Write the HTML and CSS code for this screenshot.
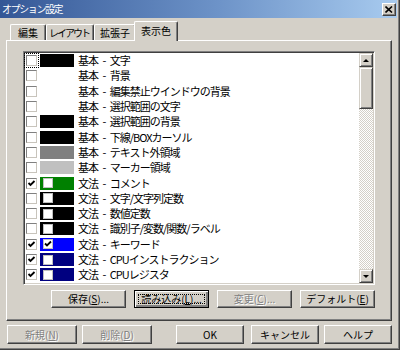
FILE: index.html
```html
<!DOCTYPE html>
<html>
  <head>
    <meta charset="utf-8">
    <link rel="stylesheet" href="styles.css">
  </head>
  <body>
    <div class="window">

      <div class="titlebar">
        <span class="title">オプション設定</span>
        <span class="closebtn">
          <svg width="8" height="7" viewBox="0 0 8 7"><path d="M0.5 0.5 L7 6.5 M7 0.5 L0.5 6.5" stroke="#000" stroke-width="1.6"/></svg>
        </span>
      </div>

      <div class="tabs">
        <div class="tab t1">編集</div>
        <div class="tab t2">レイアウト</div>
        <div class="tab t3">拡張子</div>
        <div class="tab active">表示色</div>
      </div>

      <div class="panel">
        <div class="list">
          <div class="rows">
            <div class="row"><span class="chk focus"></span><span class="swatch black"></span><span class="label">基本 - 文字</span></div>
            <div class="row"><span class="chk"></span><span class="swatch white"></span><span class="label">基本 - 背景</span></div>
            <div class="row"><span class="chk"></span><span class="swatch white"></span><span class="label">基本 - 編集禁止ウインドウの背景</span></div>
            <div class="row"><span class="chk"></span><span class="swatch white"></span><span class="label">基本 - 選択範囲の文字</span></div>
            <div class="row"><span class="chk"></span><span class="swatch black"></span><span class="label">基本 - 選択範囲の背景</span></div>
            <div class="row"><span class="chk"></span><span class="swatch black"></span><span class="label">基本 - 下線/BOXカーソル</span></div>
            <div class="row"><span class="chk"></span><span class="swatch gray"></span><span class="label">基本 - テキスト外領域</span></div>
            <div class="row"><span class="chk"></span><span class="swatch silver"></span><span class="label">基本 - マーカー領域</span></div>
            <div class="row">
              <span class="chk on"><svg width="9" height="9" viewBox="0 0 9 9"><path d="M1.5 4 L3.5 6 L7.5 2" stroke="#000" stroke-width="1.8" fill="none"/></svg></span>
              <span class="swatch green"><span class="inbox"></span></span>
              <span class="label">文法 - コメント</span>
            </div>
            <div class="row"><span class="chk"></span><span class="swatch black"><span class="inbox"></span></span><span class="label">文法 - 文字/文字列定数</span></div>
            <div class="row"><span class="chk"></span><span class="swatch black"><span class="inbox"></span></span><span class="label">文法 - 数値定数</span></div>
            <div class="row"><span class="chk"></span><span class="swatch black"><span class="inbox"></span></span><span class="label">文法 - 識別子/変数/関数/ラベル</span></div>
            <div class="row">
              <span class="chk on"><svg width="9" height="9" viewBox="0 0 9 9"><path d="M1.5 4 L3.5 6 L7.5 2" stroke="#000" stroke-width="1.8" fill="none"/></svg></span>
              <span class="swatch blue"><span class="inbox"><svg width="8" height="8" viewBox="0 0 8 8"><path d="M1 3.5 L3 5.5 L7 1.5" stroke="#000" stroke-width="1.8" fill="none"/></svg></span></span>
              <span class="label">文法 - キーワード</span>
            </div>
            <div class="row">
              <span class="chk on"><svg width="9" height="9" viewBox="0 0 9 9"><path d="M1.5 4 L3.5 6 L7.5 2" stroke="#000" stroke-width="1.8" fill="none"/></svg></span>
              <span class="swatch navy"><span class="inbox"></span></span>
              <span class="label">文法 - CPUインストラクション</span>
            </div>
            <div class="row">
              <span class="chk on"><svg width="9" height="9" viewBox="0 0 9 9"><path d="M1.5 4 L3.5 6 L7.5 2" stroke="#000" stroke-width="1.8" fill="none"/></svg></span>
              <span class="swatch navy"><span class="inbox"></span></span>
              <span class="label">文法 - CPUレジスタ</span>
            </div>
          </div>
          <div class="scrollbar">
            <div class="sbtn"><span class="arrow-up"></span></div>
            <div class="thumb"></div>
            <div class="track"></div>
            <div class="sbtn"><span class="arrow-down"></span></div>
          </div>
        </div>

        <div class="btnrow">
          <div class="btn wide">保存(<u>S</u>)...</div>
          <div class="btn wide focused">読み込み(<u>L</u>)...</div>
          <div class="btn wide disabled">変更(<u>C</u>)...</div>
          <div class="btn wide">デフォルト(<u>E</u>)</div>
        </div>
      </div>

      <div class="footer">
        <div class="btn small disabled">新規(<u>N</u>)</div>
        <div class="btn small disabled">削除(<u>D</u>)</div>
        <div class="btn mid ok">OK</div>
        <div class="btn mid">キャンセル</div>
        <div class="btn mid">ヘルプ</div>
      </div>

    </div>
  </body>
</html>
```

FILE: styles.css
```css
* {box-sizing: border-box;}

body {
  margin: 0;
  font-family: "Noto Sans CJK JP", sans-serif;
  font-size: 10px;
  color: #000;
  background-color: #d4d0c8;
}

.window {
  width: 400px;
  height: 350px;
  background-color: #d4d0c8;
  border-right: 1px solid #404040;
  border-bottom: 1px solid #404040;
  box-shadow: inset -1px -1px #808080;
  display: flex;
  flex-direction: column;
}

/* title bar */
.titlebar {
  height: 18px;
  margin-right: 2px;
  padding: 0 1px 0 2px;
  background: linear-gradient(to right, #345796, #6d93c8 55%, #a8cbef);
  display: flex;
  align-items: center;
  justify-content: space-between;
}

.title {
  color: #fff;
  font-size: 10px;
  letter-spacing: -1.4px;
  line-height: 1;
}

.closebtn {
  width: 14px;
  height: 13px;
  background-color: #d4d0c8;
  border-top: 1px solid #fff;
  border-left: 1px solid #fff;
  border-right: 1px solid #404040;
  border-bottom: 1px solid #404040;
  box-shadow: inset -1px -1px #808080;
  display: flex;
  align-items: center;
  justify-content: center;
}

/* tabs */
.tabs {
  height: 22px;
  padding-left: 10px;
  display: flex;
  align-items: flex-end;
}

.tab {
  height: 16px;
  border-top: 1px solid #fff;
  border-left: 1px solid #fff;
  border-right: 1px solid #404040;
  box-shadow: inset -1px 0 #808080;
  border-radius: 2px 2px 0 0;
  display: flex;
  align-items: center;
  justify-content: center;
  line-height: 1;
  white-space: nowrap;
}

.t1 {width: 36px;}
.t2 {width: 48px; letter-spacing: -2px; padding-right: 2px;}
.t3 {width: 42px;}

.tab.active {
  width: 44px;
  height: 20px;
  margin-left: -2px;
  margin-bottom: -1px;
  padding-bottom: 2px;
  background-color: #d4d0c8;
  z-index: 1;
}

/* panel */
.panel {
  width: 386px;
  height: 281px;
  margin-left: 6px;
  padding: 10px 0 0 16px;
  border-top: 1px solid #fff;
  border-left: 1px solid #fff;
  border-right: 1px solid #404040;
  border-bottom: 1px solid #404040;
  box-shadow: inset -1px -1px #808080;
  display: flex;
  flex-direction: column;
}

.list {
  width: 352px;
  height: 234px;
  background-color: #fff;
  border-top: 1px solid #808080;
  border-left: 1px solid #808080;
  border-right: 1px solid #fff;
  border-bottom: 1px solid #fff;
  box-shadow: inset 1px 1px #404040, inset -1px -1px #d4d0c8;
  padding: 1px;
  display: flex;
  overflow: hidden;
}

.rows {
  flex: 1;
  padding-left: 1px;
}

.row {
  height: 15.3px;
  display: flex;
  align-items: center;
  white-space: nowrap;
}

.chk {
  width: 11px;
  height: 11px;
  background-color: #fff;
  border-top: 1px solid #808080;
  border-left: 1px solid #808080;
  border-right: 1px solid #c8c4bc;
  border-bottom: 1px solid #c8c4bc;
  display: flex;
  align-items: center;
  justify-content: center;
}

.chk.focus {
  outline: 1px dotted #000;
  outline-offset: 1px;
}

.swatch {
  width: 34px;
  height: 13px;
  margin-left: 3px;
  padding-left: 3px;
  display: flex;
  align-items: center;
}

.black {background-color: #000;}
.white {background-color: #fff;}
.gray {background-color: #808080;}
.silver {background-color: #c0c0c0;}
.green {background-color: #008000;}
.blue {background-color: #0000ff;}
.navy {background-color: #000080;}

.inbox {
  width: 10px;
  height: 10px;
  background-color: #fff;
  border: 1px solid #c0c0c0;
  display: flex;
  align-items: center;
  justify-content: center;
}

.label {
  margin-left: 4px;
  font-size: 11px;
  line-height: 1;
  word-spacing: 3px;
  letter-spacing: -1px;
}

/* scrollbar */
.scrollbar {
  width: 14px;
  display: flex;
  flex-direction: column;
}

.sbtn, .thumb {
  background-color: #d4d0c8;
  border-top: 1px solid #d4d0c8;
  border-left: 1px solid #d4d0c8;
  border-right: 1px solid #404040;
  border-bottom: 1px solid #404040;
  box-shadow: inset 1px 1px #fff, inset -1px -1px #808080;
}

.sbtn {
  height: 14px;
  display: flex;
  align-items: center;
  justify-content: center;
}

.thumb {height: 42px;}

.track {
  flex: 1;
  background: repeating-conic-gradient(#fff 0 25%, #d4d0c8 0 50%) 0 0 / 2px 2px;
}

.arrow-up {
  border-left: 3px solid transparent;
  border-right: 3px solid transparent;
  border-bottom: 3px solid #000;
}

.arrow-down {
  border-left: 3px solid transparent;
  border-right: 3px solid transparent;
  border-top: 3px solid #000;
}

/* buttons */
.btnrow {
  width: 352px;
  margin-top: 5px;
  display: flex;
  justify-content: flex-end;
  gap: 8px;
}

.btn {
  background-color: #d4d0c8;
  border-top: 1px solid #fff;
  border-left: 1px solid #fff;
  border-right: 1px solid #404040;
  border-bottom: 1px solid #404040;
  box-shadow: inset -1px -1px #808080;
  display: flex;
  align-items: center;
  justify-content: center;
  line-height: 1;
  white-space: nowrap;
}

.btn u {text-underline-offset: 1px;}

.wide {width: 75px; height: 18px;}
.small {width: 70px; height: 19px;}
.mid {width: 68px; height: 19px;}

.btn.focused {
  border: 1px solid #000;
  box-shadow: inset 1px 1px #fff, inset -2px -2px #808080;
  outline: 1px dotted #000;
  outline-offset: -5px;
}

.btn.disabled {
  color: #808080;
  text-shadow: 1px 1px #fff;
}

.footer {
  margin-top: 4px;
  padding: 0 7px;
  display: flex;
  gap: 5px;
}

.ok {
  margin-left: auto;
  margin-right: 2px;
}
```
